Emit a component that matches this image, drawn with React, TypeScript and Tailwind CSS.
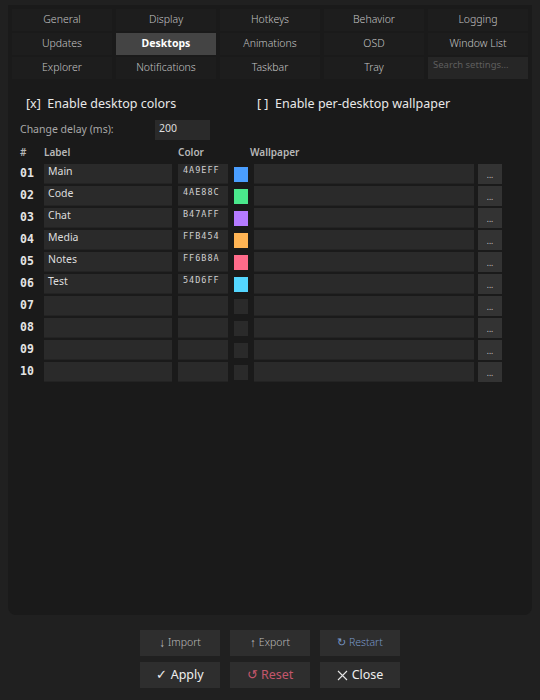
import React from "react";

const tabs = [
  "General", "Display", "Hotkeys", "Behavior", "Logging",
  "Updates", "Desktops", "Animations", "OSD", "Window List",
  "Explorer", "Notifications", "Taskbar", "Tray",
];

const desktops = [
  { label: "Main", color: "4A9EFF" },
  { label: "Code", color: "4AE88C" },
  { label: "Chat", color: "B47AFF" },
  { label: "Media", color: "FFB454" },
  { label: "Notes", color: "FF6B8A" },
  { label: "Test", color: "54D6FF" },
  { label: "", color: "" },
  { label: "", color: "" },
  { label: "", color: "" },
  { label: "", color: "" },
];

const ui = { fontFamily: '"Noto Sans", "Open Sans", sans-serif' };
const mono = { fontFamily: '"DejaVu Sans Mono", "Liberation Mono", monospace' };

export default function App() {
  return (
    <div className="w-[540px] h-[700px] bg-[#202020] text-[#ddd] flex flex-col" style={ui}>
      <div className="mx-2 mt-[5px] h-[610px] bg-[#1a1a1a] rounded-b-lg px-1 pt-1 flex flex-col">
        <div className="grid grid-cols-5 gap-x-1 gap-y-[2px]">
          {tabs.map((t) => (
            <div
              key={t}
              className={`h-[22px] flex items-center justify-center text-[10.5px] ${
                t === "Desktops"
                  ? "bg-[#444] text-white font-bold"
                  : "bg-[#1d1d1d] text-[#c4c4c4] font-light"
              }`}
            >
              {t}
            </div>
          ))}
          <div className="h-[22px] bg-[#262626] text-[9.5px] text-[#5e5e5e] pl-[5px] pt-[1px]">
            Search settings...
          </div>
        </div>

        <div className="pl-2">
          <div className="mt-[16px] flex items-center h-[18px] text-[12.5px] text-[#e8e8e8]">
            <span className="pl-[6px] w-[237px]">[x]&nbsp; Enable desktop colors</span>
            <span>[ ]&nbsp; Enable per-desktop wallpaper</span>
          </div>

          <div className="mt-[7px] flex items-center h-5">
            <span className="text-[10.5px] text-[#a8a8a8] w-[135px]">Change delay (ms):</span>
            <div className="w-[55px] h-5 bg-[#2a2a2a] text-[10.5px] text-[#ddd] pl-1 leading-[16px]">200</div>
          </div>

          <div className="mt-[5px] flex items-center h-[14px] text-[10px] font-semibold text-[#b8b8b8]">
            <span className="w-6">#</span>
            <span className="w-[134px]">Label</span>
            <span className="w-[72px]">Color</span>
            <span>Wallpaper</span>
          </div>

          <div className="mt-[5px] flex flex-col gap-[2px]">
            {desktops.map((d, i) => (
              <div key={i} className="flex items-center h-5 shrink-0">
                <span className="w-6 shrink-0 text-[11.5px] font-bold text-[#e4e4e4] leading-none" style={mono}>
                  {String(i + 1).padStart(2, "0")}
                </span>
                <div className="w-[128px] shrink-0 h-5 bg-[#2a2a2a] border-b border-[#232323] text-[10.5px] text-[#ddd] pl-1 leading-[15px]">
                  {d.label}
                </div>
                <div
                  className="ml-[6px] w-[50px] shrink-0 h-5 bg-[#2a2a2a] border-b border-[#232323] text-[8.5px] tracking-[1px] text-[#cfcfcf] pl-[5px] leading-[12px]"
                  style={mono}
                >
                  {d.color}
                </div>
                <div
                  className={`ml-[6px] w-[14px] shrink-0 h-[15px] ${d.color ? "" : "bg-[#2a2a2a]"}`}
                  style={d.color ? { backgroundColor: "#" + d.color } : undefined}
                />
                <div className="ml-[6px] w-[220px] shrink-0 h-5 bg-[#2a2a2a] border-b border-[#232323]" />
                <div className="ml-1 w-6 shrink-0 h-5 bg-[#333] flex items-end justify-center pb-[5px] text-[8px] leading-none text-[#ccc]">
                  ...
                </div>
              </div>
            ))}
          </div>
        </div>
      </div>

      <div className="mt-[15px] flex flex-col items-center gap-[6px]">
        <div className="flex gap-[10px]">
          <div className="w-20 h-[26px] bg-[#2e2e2e] flex items-center justify-center gap-[3px] text-[10.5px] text-[#bbb] font-light">
            <span className="text-[12px] font-bold">↓</span>Import
          </div>
          <div className="w-20 h-[26px] bg-[#2e2e2e] flex items-center justify-center gap-[3px] text-[10.5px] text-[#bbb] font-light">
            <span className="text-[12px] font-bold">↑</span>Export
          </div>
          <div className="w-20 h-[26px] bg-[#2e2e2e] flex items-center justify-center text-[10.5px] text-[#7898c8] font-light">↻ Restart</div>
        </div>
        <div className="flex gap-[10px]">
          <div className="w-20 h-[26px] bg-[#2e2e2e] flex items-center justify-center text-[12.5px] text-[#eee]">✓ Apply</div>
          <div className="w-20 h-[26px] bg-[#2e2e2e] flex items-center justify-center text-[12.5px] text-[#c4566c]">↺ Reset</div>
          <div className="w-20 h-[26px] bg-[#2e2e2e] flex items-center justify-center gap-[4px] text-[12.5px] text-[#eee]">
            <svg width="11" height="11" viewBox="0 0 11 11" stroke="#e6e6e6" strokeWidth="1.1">
              <path d="M1 1L10 10M10 1L1 10" />
            </svg>
            Close
          </div>
        </div>
      </div>
    </div>
  );
}
